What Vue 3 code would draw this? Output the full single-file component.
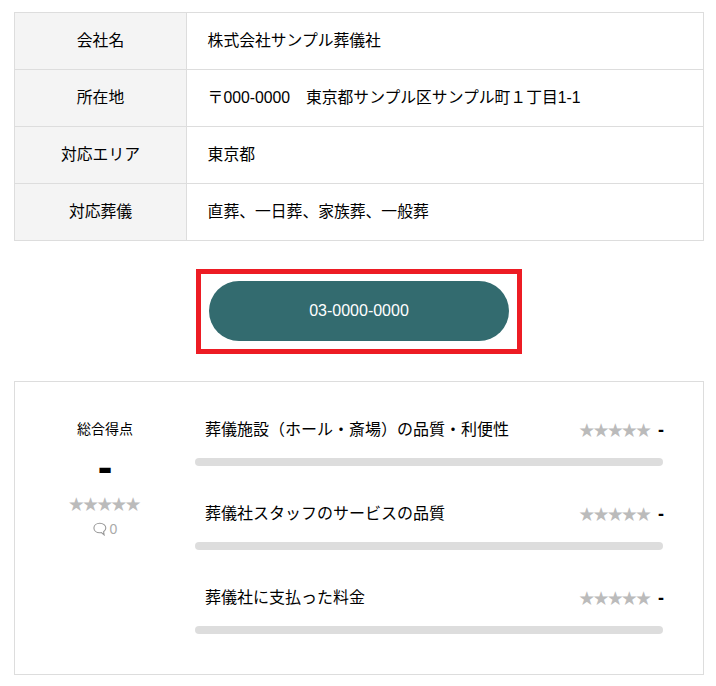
<template>
  <div class="page">
    <table class="info-table">
      <tbody>
        <tr v-for="row in rows" :key="row.label">
          <th>{{ row.label }}</th>
          <td>{{ row.value }}</td>
        </tr>
      </tbody>
    </table>

    <div class="tel-wrap">
      <div class="tel-frame">
        <a class="tel-button">03-0000-0000</a>
      </div>
    </div>

    <section class="rating-panel">
      <div class="total">
        <p class="total-label">総合得点</p>
        <p class="total-score">-</p>
        <p class="stars">★★★★★</p>
        <p class="comments">
          <svg class="comment-icon" viewBox="0 0 14 14" width="14" height="14" aria-hidden="true">
            <path d="M6.8 1.2C3.4 1.200.9 3.300.9 6s2.500 4.800 5.900 4.800c.6 0 1.100-.1 1.600-.2l2.700 2.300-.5-3.200c1.300-.9 2.200-2.300 2.200-3.700 0-2.700-2.600-4.800-6-4.800z" fill="none" stroke="#999" stroke-width="1.100" />
          </svg>
          <span>0</span>
        </p>
      </div>
      <div class="items">
        <div v-for="item in items" :key="item" class="item">
          <div class="item-head">
            <span class="item-name">{{ item }}</span>
            <span class="item-score"><span class="stars">★★★★★</span><b>-</b></span>
          </div>
          <div class="bar"></div>
        </div>
      </div>
    </section>
  </div>
</template>

<script setup>
const rows = [
  { label: '会社名', value: '株式会社サンプル葬儀社' },
  { label: '所在地', value: '〒000-0000　東京都サンプル区サンプル町１丁目1-1' },
  { label: '対応エリア', value: '東京都' },
  { label: '対応葬儀', value: '直葬、一日葬、家族葬、一般葬' }
];

const items = [
  '葬儀施設（ホール・斎場）の品質・利便性',
  '葬儀社スタッフのサービスの品質',
  '葬儀社に支払った料金'
];
</script>

<style>
body {
  background: #fff;
}
</style>

<style scoped>
.page {
  box-sizing: border-box;
  width: 716px;
  height: 686px;
  padding: 12px 12px 0 14px;
  overflow: hidden;
  font-family: "Liberation Sans", "Noto Sans CJK JP", sans-serif;
  color: #000;
}

p {
  margin: 0;
}

.info-table {
  width: 690px;
  border-collapse: collapse;
  table-layout: fixed;
  font-size: 15.8px;
}

.info-table th,
.info-table td {
  box-sizing: border-box;
  height: 57px;
  padding: 0 0 4px;
  border: 1px solid #ddd;
  font-weight: 400;
}

.info-table th {
  width: 172px;
  background: #f4f4f4;
  text-align: center;
}

.info-table td {
  padding-left: 20.6px;
  text-align: left;
}

.tel-wrap {
  display: flex;
  justify-content: center;
  margin-top: 28px;
}

.tel-frame {
  box-sizing: border-box;
  width: 326px;
  height: 85px;
  padding: 7px 8px;
  border: 5px solid #ed1c24;
}

.tel-button {
  display: flex;
  align-items: center;
  justify-content: center;
  width: 300px;
  height: 60px;
  border-radius: 30px;
  background: #336b6f;
  color: #fff;
  font-size: 16px;
}

.rating-panel {
  box-sizing: border-box;
  display: flex;
  width: 690px;
  height: 294px;
  margin-top: 27px;
  border: 1px solid #ddd;
}

.total {
  width: 180px;
  padding-top: 37px;
  text-align: center;
}

.total-label {
  font-size: 14px;
  line-height: 20px;
}

.total-score {
  margin-top: 6px;
  font-size: 44px;
  font-weight: 700;
  line-height: 44px;
}

.stars {
  color: #bbb;
  font-family: "Noto Sans CJK JP", sans-serif;
  font-size: 15.6px;
  letter-spacing: -1.4px;
  line-height: 18px;
}

.total .stars {
  margin-top: 5px;
  padding-right: 2px;
}

.comments {
  display: flex;
  align-items: center;
  justify-content: center;
  gap: 3px;
  margin-top: 9px;
  color: #aaa;
  font-size: 14px;
  line-height: 16px;
}

.items {
  display: flex;
  flex-direction: column;
  gap: 35px;
  width: 468px;
  padding-top: 35px;
}

.item-head {
  display: flex;
  align-items: center;
  justify-content: space-between;
  height: 24px;
  padding-left: 10px;
  font-size: 16px;
}

.item-name {
  position: relative;
  top: -1px;
}

.item-score {
  display: flex;
  align-items: center;
  gap: 7px;
}

.item-score b {
  position: relative;
  top: 1px;
  left: 1px;
  font-size: 18px;
}

.bar {
  height: 8px;
  margin-top: 17px;
  border-radius: 4px;
  background: #ddd;
}
</style>
